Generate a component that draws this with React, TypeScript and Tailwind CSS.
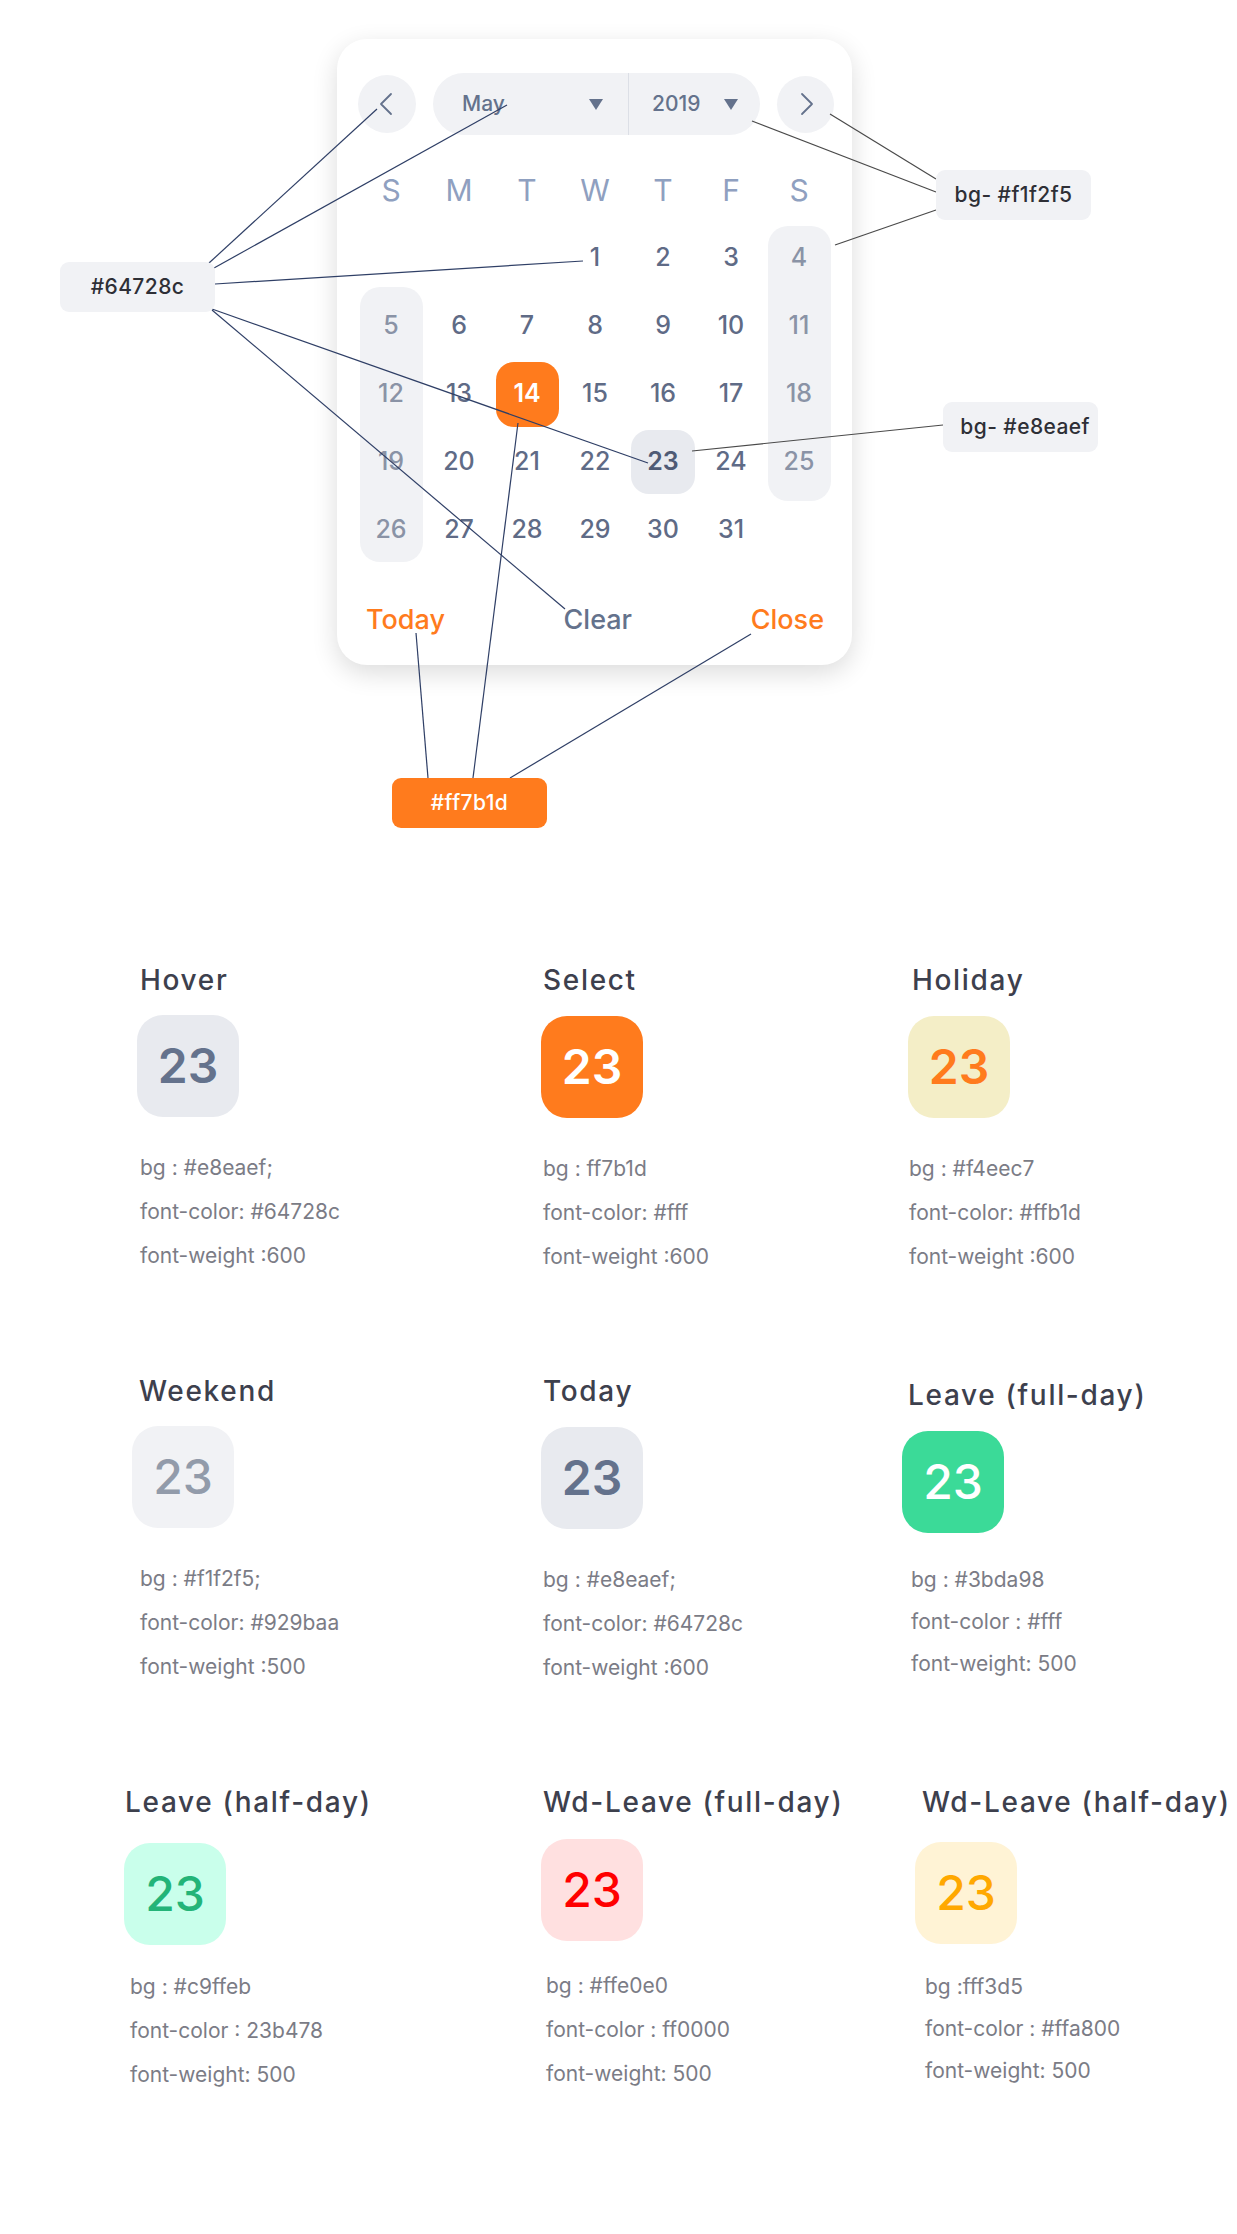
import React from 'react'

/** 注释标签：日历图上的色值说明 */
interface Note {
  text: string
  cls: string
}

const notes: Note[] = [
  { text: '#64728c', cls: 'left-[60px] top-[262px] bg-[#f1f2f5] text-[#2e2f36] justify-center' },
  { text: 'bg- #f1f2f5', cls: 'left-[936px] top-[170px] bg-[#f1f2f5] text-[#2e2f36] justify-center' },
  { text: 'bg- #e8eaef', cls: 'left-[943px] top-[402px] bg-[#f1f2f5] text-[#2e2f36] justify-end pr-[8px]' },
  { text: '#ff7b1d', cls: 'left-[392px] top-[778px] bg-[#ff7b1d] text-white justify-center' },
]

// 连接线 [x1, y1, x2, y2, color]
const lines: [number, number, number, number, string][] = [
  [209, 263, 377, 109, '#2f3f66'],
  [214, 268, 507, 105, '#2f3f66'],
  [215, 284, 583, 261, '#2f3f66'],
  [212, 309, 648, 463, '#2f3f66'],
  [212, 310, 565, 609, '#2f3f66'],
  [830, 114, 936, 179, '#4a4a4a'],
  [752, 121, 936, 192, '#4a4a4a'],
  [835, 245, 936, 210, '#4a4a4a'],
  [692, 451, 943, 425, '#4a4a4a'],
  [416, 633, 428, 778, '#2f3f66'],
  [518, 423, 473, 778, '#2f3f66'],
  [751, 634, 510, 778, '#2f3f66'],
]

const weekdays = ['S', 'M', 'T', 'W', 'T', 'F', 'S']

// 2019 年 5 月，1 号是周三
const cells: (number | null)[] = [
  null, null, null, 1, 2, 3, 4,
  5, 6, 7, 8, 9, 10, 11,
  12, 13, 14, 15, 16, 17, 18,
  19, 20, 21, 22, 23, 24, 25,
  26, 27, 28, 29, 30, 31, null,
]

function Caret() {
  return (
    <svg width="14" height="11" viewBox="0 0 14 11">
      <polygon points="0,0 14,0 7,11" fill="#64728c" />
    </svg>
  )
}

function Chevron({ dir }: { dir: 'left' | 'right' }) {
  return (
    <svg width="14" height="24" viewBox="0 0 14 24" fill="none">
      <path
        d={dir === 'left' ? 'M12 2 L2 12 L12 22' : 'M2 2 L12 12 L2 22'}
        stroke="#64728c"
        strokeWidth="1.8"
        strokeLinecap="round"
        strokeLinejoin="round"
      />
    </svg>
  )
}

function Calendar() {
  return (
    <div className="ml-[337px] w-[515px] rounded-[30px] bg-white shadow-[0_8px_26px_rgba(0,0,0,0.14)] pt-[34px] pb-[26px]">
      {/* 头部：切换月份 */}
      <div className="flex items-center justify-between pl-[21px] pr-[18px] h-[62px]">
        <button className="w-[58px] h-[58px] rounded-full bg-[#f1f2f5] flex items-center justify-center pr-[2px]">
          <Chevron dir="left" />
        </button>
        <div className="w-[327px] h-[62px] rounded-full bg-[#f1f2f5] flex items-stretch">
          <div className="flex-1 flex items-center justify-between pl-[29px] pr-[25px]">
            <span className="text-[21px] font-medium text-[#64728c]">May</span>
            <Caret />
          </div>
          <div className="w-px bg-[#dcdfe6]" />
          <div className="w-[131px] flex items-center justify-between pl-[23px] pr-[22px]">
            <span className="text-[21px] font-medium text-[#64728c]">2019</span>
            <Caret />
          </div>
        </div>
        <button className="w-[57px] h-[57px] rounded-full bg-[#f1f2f5] flex items-center justify-center pl-[2px]">
          <Chevron dir="right" />
        </button>
      </div>

      {/* 星期 */}
      <div className="grid grid-cols-7 pl-[20px] pr-[19px] mt-[33px] h-[40px]">
        {weekdays.map((d, i) => (
          <div key={i} className="flex items-center justify-center text-[30px] text-[#8fa0c0]">
            {d}
          </div>
        ))}
      </div>

      {/* 日期 */}
      <div className="grid grid-cols-7 auto-rows-[64px] gap-y-[4px] pl-[20px] pr-[19px] mt-[18px]">
        <div className="col-start-1 row-start-2 row-span-4 w-[63px] justify-self-center mt-[-7px] rounded-[20px] bg-[#f1f2f5]" />
        <div className="col-start-7 row-start-1 row-span-4 w-[63px] justify-self-center mb-[-7px] rounded-[20px] bg-[#f1f2f5]" />
        {cells.map((n, i) => {
          const col = (i % 7) + 1
          const row = Math.floor(i / 7) + 1
          if (n === null) return null
          const weekend = col === 1 || col === 7
          const base = 'w-[63px] h-[64px] justify-self-center flex items-center justify-center text-[25px] z-10'
          let look = weekend ? 'text-[#8a93a6] font-medium' : 'text-[#5f6b86] font-medium'
          if (n === 14) look = 'bg-[#ff7b1d] text-white font-semibold rounded-[18px] h-[65px] self-center'
          if (n === 23) look = 'bg-[#e8eaef] text-[#4f5b75] font-semibold rounded-[18px] w-[64px] h-[61px] self-center'
          return (
            <div
              key={i}
              className={`${base} ${look}`}
              style={{ gridColumnStart: col, gridRowStart: row }}
            >
              {n}
            </div>
          )
        })}
      </div>

      {/* 底部操作 */}
      <div className="flex items-center justify-between pl-[29px] pr-[28px] mt-[38px] text-[27px] leading-[39px] font-medium">
        <span className="text-[#ff7b1d]">Today</span>
        <span className="text-[#64728c]">Clear</span>
        <span className="text-[#ff7b1d]">Close</span>
      </div>
    </div>
  )
}

/** 状态样例 */
interface Sample {
  title: string
  bg: string
  fg: string
  weight: string
  lines: string[]
  titleCls: string
  boxCls: string
  textCls: string
  gap: string
}

const rows: Sample[][] = [
  [
    {
      title: 'Hover', bg: 'bg-[#e8eaef]', fg: 'text-[#64728c]', weight: 'font-semibold',
      lines: ['bg : #e8eaef;', 'font-color: #64728c', 'font-weight :600'],
      titleCls: 'ml-[16px]', boxCls: 'ml-[13px] mt-[18px]', textCls: 'ml-[16px] mt-[29px]', gap: 'leading-[44px]',
    },
    {
      title: 'Select', bg: 'bg-[#ff7b1d]', fg: 'text-white', weight: 'font-semibold',
      lines: ['bg : ff7b1d', 'font-color: #fff', 'font-weight :600'],
      titleCls: 'ml-[2px]', boxCls: 'ml-0 mt-[19px]', textCls: 'ml-[2px] mt-[29px]', gap: 'leading-[44px]',
    },
    {
      title: 'Holiday', bg: 'bg-[#f4eec7]', fg: 'text-[#ff7b1d]', weight: 'font-semibold',
      lines: ['bg : #f4eec7', 'font-color: #ffb1d', 'font-weight :600'],
      titleCls: 'ml-[10px]', boxCls: 'ml-[6px] mt-[19px]', textCls: 'ml-[7px] mt-[29px]', gap: 'leading-[44px]',
    },
  ],
  [
    {
      title: 'Weekend', bg: 'bg-[#f1f2f5]', fg: 'text-[#929baa]', weight: 'font-medium',
      lines: ['bg : #f1f2f5;', 'font-color: #929baa', 'font-weight :500'],
      titleCls: 'ml-[15px]', boxCls: 'ml-[8px] mt-[18px]', textCls: 'ml-[16px] mt-[29px]', gap: 'leading-[44px]',
    },
    {
      title: 'Today', bg: 'bg-[#e8eaef]', fg: 'text-[#64728c]', weight: 'font-semibold',
      lines: ['bg : #e8eaef;', 'font-color: #64728c', 'font-weight :600'],
      titleCls: 'ml-[2px]', boxCls: 'ml-0 mt-[19px]', textCls: 'ml-[2px] mt-[29px]', gap: 'leading-[44px]',
    },
    {
      title: 'Leave (full-day)', bg: 'bg-[#3bda98]', fg: 'text-white', weight: 'font-medium',
      lines: ['bg : #3bda98', 'font-color : #fff', 'font-weight: 500'],
      titleCls: 'ml-[6px] mt-[4px]', boxCls: 'ml-0 mt-[19px]', textCls: 'ml-[9px] mt-[26px]', gap: 'leading-[42px]',
    },
  ],
  [
    {
      title: 'Leave (half-day)', bg: 'bg-[#c9ffeb]', fg: 'text-[#23b478]', weight: 'font-medium',
      lines: ['bg : #c9ffeb', 'font-color : 23b478', 'font-weight: 500'],
      titleCls: 'ml-px', boxCls: 'ml-0 mt-[24px]', textCls: 'ml-[6px] mt-[20px]', gap: 'leading-[44px]',
    },
    {
      title: 'Wd-Leave (full-day)', bg: 'bg-[#ffe0e0]', fg: 'text-[#ff0000]', weight: 'font-medium',
      lines: ['bg : #ffe0e0', 'font-color : ff0000', 'font-weight: 500'],
      titleCls: 'ml-[2px]', boxCls: 'ml-0 mt-[20px]', textCls: 'ml-[5px] mt-[23px]', gap: 'leading-[44px]',
    },
    {
      title: 'Wd-Leave (half-day)', bg: 'bg-[#fff3d5]', fg: 'text-[#ffa800]', weight: 'font-medium',
      lines: ['bg :fff3d5', 'font-color : #ffa800', 'font-weight: 500'],
      titleCls: 'ml-[20px]', boxCls: 'ml-[13px] mt-[23px]', textCls: 'ml-[23px] mt-[22px]', gap: 'leading-[42px]',
    },
  ],
]

function SampleCard({ s }: { s: Sample }) {
  return (
    <div className="flex flex-col">
      <div
        className={`text-[28px] leading-[33px] tracking-[0.06em] font-medium text-[#3d404d] whitespace-nowrap ${s.titleCls}`}
      >
        {s.title}
      </div>
      <div
        className={`w-[102px] h-[102px] rounded-[26px] flex items-center justify-center text-[48px] ${s.bg} ${s.fg} ${s.weight} ${s.boxCls}`}
      >
        23
      </div>
      <div className={`text-[21px] text-[#7b7c86] whitespace-nowrap ${s.gap} ${s.textCls}`}>
        {s.lines.map((l) => (
          <div key={l}>{l}</div>
        ))}
      </div>
    </div>
  )
}

export default function App() {
  return (
    <div className="w-[1237px] min-h-[2234px] bg-white overflow-hidden font-['Inter','Noto_Sans',sans-serif]">
      {/* 日历与色值标注 */}
      <div className="relative h-[964px] pt-[39px]">
        <Calendar />
        <svg className="absolute inset-0 pointer-events-none z-20" width="1237" height="900">
          {lines.map(([x1, y1, x2, y2, c], i) => (
            <line key={i} x1={x1} y1={y1} x2={x2} y2={y2} stroke={c} strokeWidth="1.2" />
          ))}
        </svg>
        {notes.map((n) => (
          <div
            key={n.text}
            className={`absolute z-30 w-[155px] h-[50px] rounded-[9px] flex items-center text-[21px] font-medium tracking-[0.02em] ${n.cls}`}
          >
            {n.text}
          </div>
        ))}
      </div>

      {/* 状态样例 */}
      <div className="flex flex-col gap-y-[96px] pl-[124px]">
        {rows.map((r, i) => (
          <div key={i} className="grid grid-cols-[417px_361px_1fr]">
            {r.map((s) => (
              <SampleCard key={s.title} s={s} />
            ))}
          </div>
        ))}
      </div>
    </div>
  )
}
